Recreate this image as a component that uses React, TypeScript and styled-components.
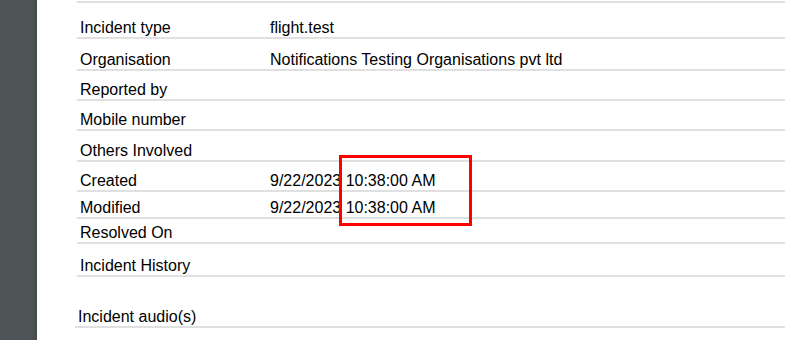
import styled, { createGlobalStyle } from 'styled-components';

const GlobalStyle = createGlobalStyle`
  html, body {
    margin: 0;
    padding: 0;
    background: #fff;
  }
  body {
    font-family: "Liberation Sans", Arial, sans-serif;
    color: #000;
  }
`;

type Field = { label: string; value?: string; height: number; inset?: boolean };

const fields: Field[] = [
  { label: 'Incident type', value: 'flight.test', height: 36 },
  { label: 'Organisation', value: 'Notifications Testing Organisations pvt ltd', height: 32 },
  { label: 'Reported by', height: 30 },
  { label: 'Mobile number', height: 30 },
  { label: 'Others Involved', height: 31 },
  { label: 'Created', value: '9/22/2023 10:38:00 AM', height: 30 },
  { label: 'Modified', value: '9/22/2023 10:38:00 AM', height: 27 },
  { label: 'Resolved On', height: 25 },
  { label: 'Incident History', height: 33 },
  { label: 'Incident audio(s)', height: 51, inset: true },
];

const App = () => {
  return (
    <Page>
      <GlobalStyle />
      <Sidebar />
      <Content>
        <DetailsTable>
          {fields.map((f) => (
            <Row key={f.label} $height={f.height} $inset={f.inset}>
              <Label>{f.label}</Label>
              <Value>{f.value}</Value>
            </Row>
          ))}
        </DetailsTable>
        <Highlight />
      </Content>
    </Page>
  );
};

export default App;

const Page = styled.div`
  display: flex;
  width: 785px;
  height: 340px;
  overflow: hidden;
`;

const Sidebar = styled.div`
  width: 37px;
  flex-shrink: 0;
  background: linear-gradient(to right, #4f5457 0%, #4f5457 85%, #45494c 100%);
`;

const Content = styled.div`
  position: relative;
  flex: 1;
  padding-left: 40px;
`;

const DetailsTable = styled.div`
  margin-top: 1px;
  border-top: 2px solid #e0e0e0;
`;

const Row = styled.div<{ $height: number; $inset?: boolean }>`
  box-sizing: border-box;
  display: flex;
  align-items: flex-end;
  height: ${(p) => p.$height}px;
  padding: 0 0 1px 3px;
  border-bottom: 2px solid #e0e0e0;
  font-size: 16px;
  line-height: 17px;
  margin-left: ${(p) => (p.$inset ? '-2px' : '0')};
`;

const Label = styled.div`
  width: 190px;
  flex-shrink: 0;
`;

const Value = styled.div`
  white-space: nowrap;
`;

const Highlight = styled.div`
  position: absolute;
  left: 302px;
  top: 155px;
  width: 133px;
  height: 71px;
  box-sizing: border-box;
  border: 3px solid #ff0000;
`;
